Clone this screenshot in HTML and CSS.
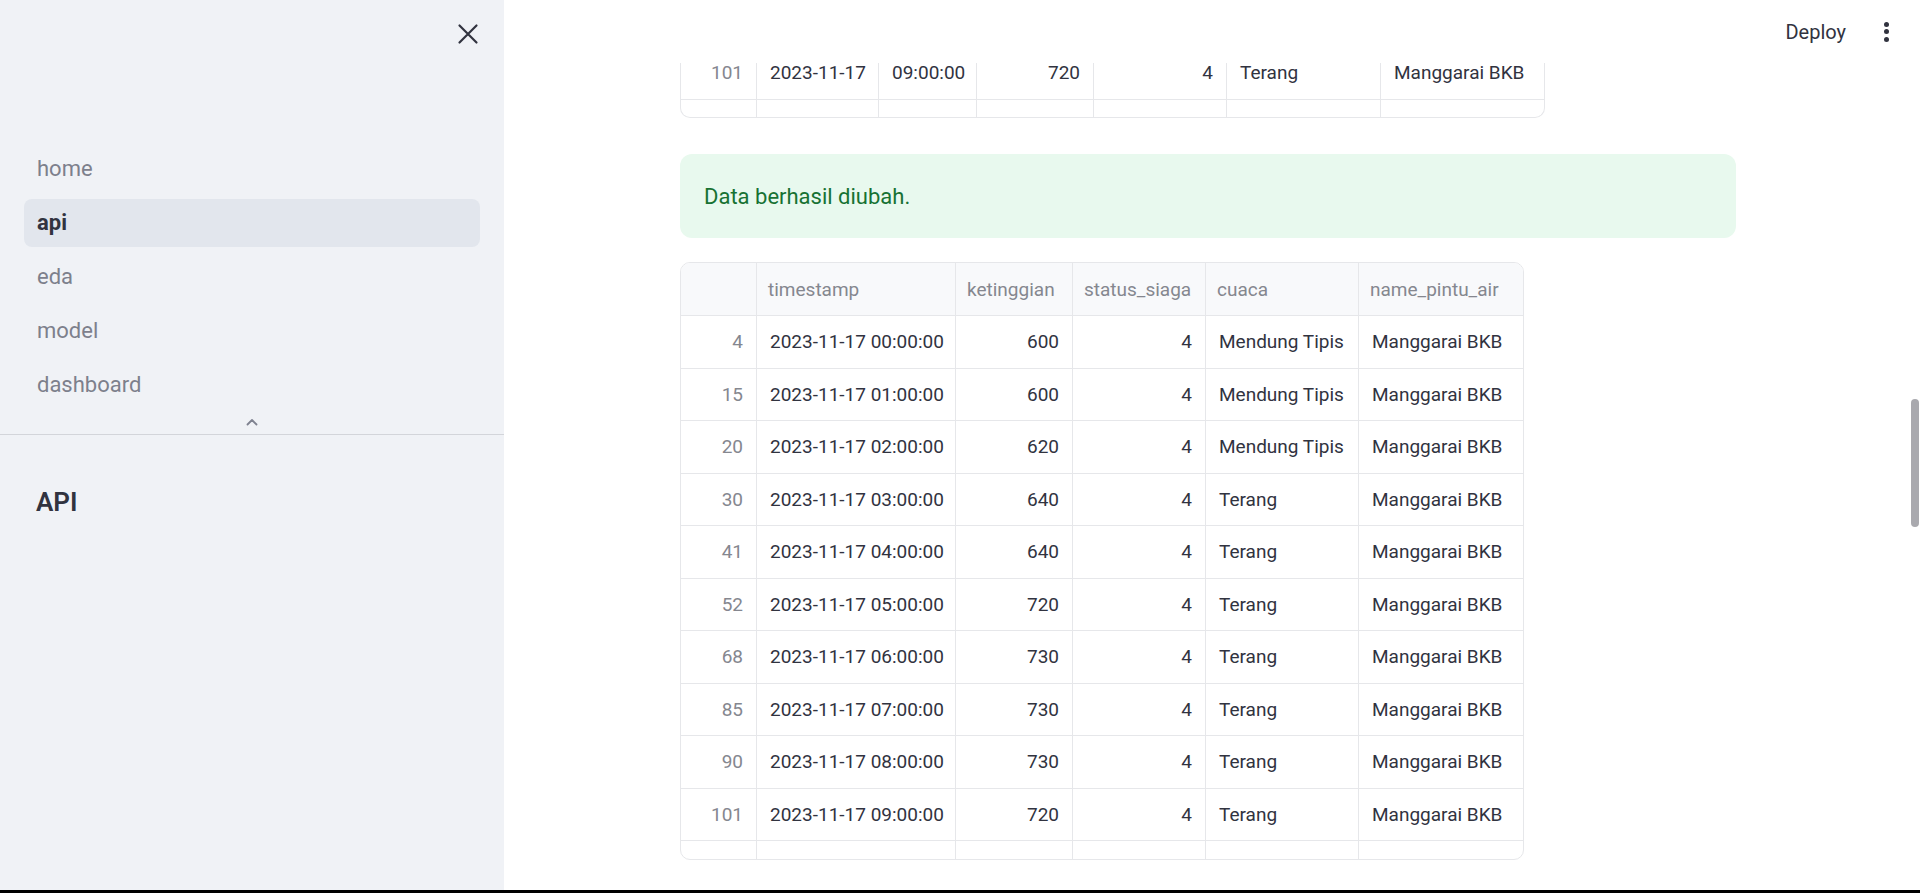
FILE: index.html
```html
<!DOCTYPE html>
<html lang="id">
<head>
<meta charset="utf-8">
<title>api</title>
<link rel="stylesheet" href="styles.css">
</head>
<body>
<div class="app">
  <aside class="sidebar">
    <div class="sidebar-top">
      <button class="close-btn" aria-label="Close sidebar">
        <svg width="24" height="24" viewBox="0 0 24 24"><path d="M3.5 3.5 L20.5 20.5 M20.5 3.5 L3.5 20.5" stroke="#31333f" stroke-width="2.2" stroke-linecap="round" fill="none"/></svg>
      </button>
    </div>
    <nav class="nav">
      <a class="nav-item">home</a>
      <a class="nav-item active">api</a>
      <a class="nav-item">eda</a>
      <a class="nav-item">model</a>
      <a class="nav-item">dashboard</a>
    </nav>
    <div class="nav-collapse">
      <svg width="14" height="10" viewBox="0 0 14 10"><path d="M2.5 7.5 L7 3 L11.5 7.5" stroke="#7f8290" stroke-width="1.8" stroke-linecap="round" stroke-linejoin="round" fill="none"/></svg>
    </div>
    <div class="sidebar-content">
      <h2 class="sidebar-title">API</h2>
    </div>
  </aside>

  <main class="main">
    <header class="topbar">
      <span class="deploy">Deploy</span>
      <span class="kebab" aria-label="Main menu"><i></i><i></i><i></i></span>
    </header>

    <div class="block">
      <div class="df df-tail">
        <div class="df-grid grid-old">
          <div class="c idx">101</div><div class="c">2023-11-17</div><div class="c">09:00:00</div><div class="c num">720</div><div class="c num">4</div><div class="c">Terang</div><div class="c last">Manggarai BKB</div>
          <div class="c idx">111</div><div class="c">2023-11-17</div><div class="c">10:00:00</div><div class="c num">720</div><div class="c num">4</div><div class="c">Terang</div><div class="c last">Manggarai BKB</div>
        </div>
      </div>

      <div class="alert">Data berhasil diubah.</div>

      <div class="df df-main">
        <div class="df-grid grid-new">
          <div class="c hd"></div><div class="c hd">timestamp</div><div class="c hd">ketinggian</div><div class="c hd">status_siaga</div><div class="c hd">cuaca</div><div class="c hd last">name_pintu_air</div>

          <div class="c idx">4</div><div class="c">2023-11-17 00:00:00</div><div class="c num">600</div><div class="c num">4</div><div class="c">Mendung Tipis</div><div class="c last">Manggarai BKB</div>
          <div class="c idx">15</div><div class="c">2023-11-17 01:00:00</div><div class="c num">600</div><div class="c num">4</div><div class="c">Mendung Tipis</div><div class="c last">Manggarai BKB</div>
          <div class="c idx">20</div><div class="c">2023-11-17 02:00:00</div><div class="c num">620</div><div class="c num">4</div><div class="c">Mendung Tipis</div><div class="c last">Manggarai BKB</div>
          <div class="c idx">30</div><div class="c">2023-11-17 03:00:00</div><div class="c num">640</div><div class="c num">4</div><div class="c">Terang</div><div class="c last">Manggarai BKB</div>
          <div class="c idx">41</div><div class="c">2023-11-17 04:00:00</div><div class="c num">640</div><div class="c num">4</div><div class="c">Terang</div><div class="c last">Manggarai BKB</div>
          <div class="c idx">52</div><div class="c">2023-11-17 05:00:00</div><div class="c num">720</div><div class="c num">4</div><div class="c">Terang</div><div class="c last">Manggarai BKB</div>
          <div class="c idx">68</div><div class="c">2023-11-17 06:00:00</div><div class="c num">730</div><div class="c num">4</div><div class="c">Terang</div><div class="c last">Manggarai BKB</div>
          <div class="c idx">85</div><div class="c">2023-11-17 07:00:00</div><div class="c num">730</div><div class="c num">4</div><div class="c">Terang</div><div class="c last">Manggarai BKB</div>
          <div class="c idx">90</div><div class="c">2023-11-17 08:00:00</div><div class="c num">730</div><div class="c num">4</div><div class="c">Terang</div><div class="c last">Manggarai BKB</div>
          <div class="c idx">101</div><div class="c">2023-11-17 09:00:00</div><div class="c num">720</div><div class="c num">4</div><div class="c">Terang</div><div class="c last">Manggarai BKB</div>
          <div class="c idx">111</div><div class="c">2023-11-17 10:00:00</div><div class="c num">720</div><div class="c num">4</div><div class="c">Terang</div><div class="c last">Manggarai BKB</div>
        </div>
      </div>
    </div>

    <div class="scroll-thumb"></div>
  </main>
</div>
<div class="bottom-edge"></div>
</body>
</html>
```

FILE: styles.css
```css
* {
  box-sizing: border-box;
}

html, body {
  margin: 0;
  padding: 0;
}

body {
  width: 1920px;
  height: 893px;
  overflow: hidden;
  font-family: Roboto, "Noto Sans", "Liberation Sans", sans-serif;
  color: #31333f;
  background: #ffffff;
  display: flex;
  flex-direction: column;
}

.app {
  display: flex;
  height: 890px;
}

.bottom-edge {
  height: 3px;
  background: #000000;
}

/* ---------- sidebar ---------- */
.sidebar {
  width: 504px;
  flex: 0 0 504px;
  background: #f0f2f6;
  display: flex;
  flex-direction: column;
}

.sidebar-top {
  height: 145px;
  display: flex;
  justify-content: flex-end;
  align-items: flex-start;
  padding: 22px 24px 0 0;
}

.close-btn {
  width: 24px;
  height: 24px;
  padding: 0;
  border: none;
  background: transparent;
  display: flex;
}

.nav {
  display: flex;
  flex-direction: column;
  gap: 6px;
  padding: 0 24px;
}

.nav-item {
  height: 48px;
  line-height: 48px;
  padding-left: 13px;
  border-radius: 8px;
  font-size: 22px;
  color: #7d808c;
}

.nav-item.active {
  background: #e2e6ed;
  color: #31333f;
  font-weight: 700;
}

.nav-collapse {
  height: 26px;
  display: flex;
  justify-content: center;
  align-items: center;
  border-bottom: 1px solid #d3d5da;
}

.sidebar-content {
  padding: 49px 36px;
}

.sidebar-title {
  margin: 0;
  font-size: 26px;
  line-height: 36px;
  font-weight: 600;
  color: #31333f;
}

/* ---------- main ---------- */
.main {
  flex: 1;
  position: relative;
  overflow: hidden;
  background: #ffffff;
}

.topbar {
  position: absolute;
  top: 0;
  left: 0;
  right: 0;
  height: 63px;
  background: #ffffff;
  display: flex;
  justify-content: flex-end;
  align-items: center;
  gap: 38px;
  padding: 0 31px 0 0;
  z-index: 2;
}

.deploy {
  font-size: 20px;
  color: #31333f;
}

.kebab {
  display: flex;
  flex-direction: column;
  gap: 2.5px;
  width: 5px;
}

.kebab i {
  display: block;
  width: 5px;
  height: 5px;
  border-radius: 50%;
  background: #31333f;
}

.scroll-thumb {
  position: absolute;
  right: 1px;
  top: 399px;
  width: 8px;
  height: 128px;
  border-radius: 4px;
  background: #a9a9ae;
}

.block {
  width: 1056px;
  margin-left: 176px;
  padding-top: 47px;
  display: flex;
  flex-direction: column;
  align-items: flex-start;
}

/* ---------- dataframes ---------- */
.df {
  border: 1px solid #e6e7ea;
  border-radius: 10px;
  overflow: hidden;
  background: #ffffff;
}

.df-tail {
  width: 865px;
  height: 71px;
  border-top: none;
  border-radius: 0 0 10px 10px;
}

.df-main {
  width: 844px;
  height: 598px;
  margin-top: 24px;
}

.df-grid {
  display: grid;
  font-size: 19px;
}

.grid-old {
  grid-template-columns: 76px 122px 98px 117px 133px 154px 1fr;
  grid-auto-rows: 52.5px;
}

.grid-new {
  grid-template-columns: 76px 199px 117px 133px 153px 1fr;
  grid-template-rows: 53px;
  grid-auto-rows: 52.5px;
}

.c {
  display: flex;
  align-items: center;
  padding: 0 13px;
  border-right: 1px solid #e6e7ea;
  border-bottom: 1px solid #e6e7ea;
  white-space: nowrap;
  overflow: hidden;
  color: #31333f;
}

.c.last {
  border-right: none;
}

.c.num,
.c.idx {
  justify-content: flex-end;
}

.c.idx {
  color: #85878f;
}

.c.hd {
  background: #f8f9fb;
  color: #85878f;
  justify-content: flex-start;
  padding: 0 11px;
}

/* ---------- alert ---------- */
.alert {
  width: 1056px;
  height: 84px;
  margin-top: 36px;
  padding: 0 24px;
  display: flex;
  align-items: center;
  border-radius: 12px;
  background: #e8f9ee;
  color: #177233;
  font-size: 22px;
}
```
